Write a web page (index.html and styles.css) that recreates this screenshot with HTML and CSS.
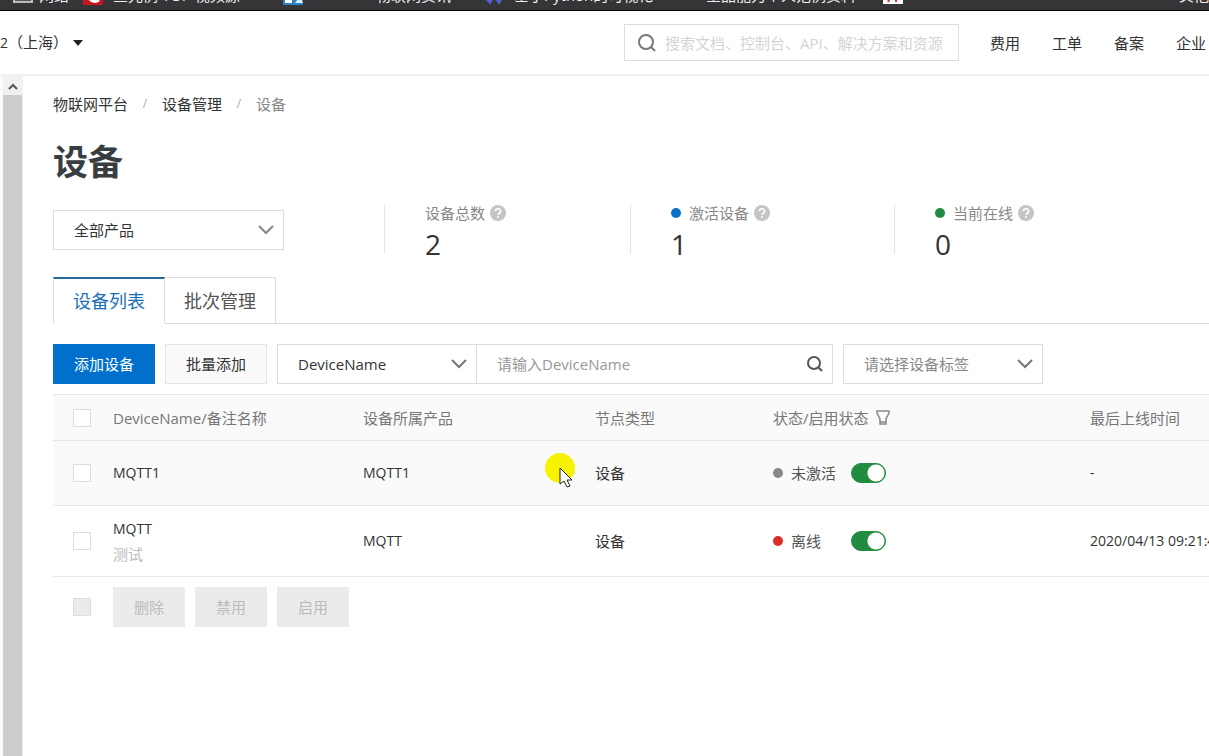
FILE: index.html
```html
<!DOCTYPE html>
<html lang="zh-CN">
<head>
<meta charset="utf-8">
<title>设备</title>
<link rel="stylesheet" href="styles.css">
</head>
<body>
<div class="page">
  <div class="bookmarks">
    <svg class="bm-folder" width="20" height="14" viewBox="0 0 20 14"><rect x="1" y="1" width="18" height="12" fill="#555" stroke="#bbb" stroke-width="2"/></svg>
    <span class="bm-label bm-first">网络</span>
    <svg class="bm-icon" width="20" height="16" viewBox="0 0 20 16"><rect width="20" height="16" fill="#c9151e"/><path d="M5 8q5 7 11 3" fill="none" stroke="#fff" stroke-width="3"/></svg>
    <span class="bm-label bm-wide">查先例 TOP 视频源</span>
    <svg class="bm-icon" width="20" height="16" viewBox="0 0 20 16"><rect width="20" height="16" fill="#2d7fc4"/><rect x="2" y="7" width="7" height="7" fill="#fff"/><path d="M12 14l5-7 3 7z" fill="#d9f0ff"/></svg>
    <span class="bm-label bm-mid">物联网资讯</span>
    <svg class="bm-icon" width="20" height="14" viewBox="0 0 20 14"><path d="M3 8l3 3 2-4M12 7l3 4 3-5" fill="none" stroke="#5a5fd0" stroke-width="3"/></svg>
    <span class="bm-label bm-paho">基于Python的可视化</span>
    <span class="bm-label bm-long">全品能力个人范例资料</span>
    <svg class="bm-icon" width="20" height="16" viewBox="0 0 20 16"><rect width="20" height="15" fill="#fff"/><path d="M5 13l3-6M13 13V7M3 9h14" stroke="#d33" stroke-width="2"/></svg>
    <span class="bm-label bm-last">其他</span>
  </div>

  <header class="topbar">
    <button class="region" type="button"><span><span class="latin">2</span>（上海）</span>
      <svg width="10" height="6" viewBox="0 0 10 6"><path d="M0 0h10L5 6z" fill="#222"/></svg></button>
    <label class="search">
      <svg width="18" height="18" viewBox="0 0 18 18"><circle cx="8" cy="8" r="7" fill="none" stroke="#777" stroke-width="2"/><path d="M13 13l4 4" stroke="#777" stroke-width="2"/></svg>
      <input type="text" placeholder="搜索文档、控制台、API、解决方案和资源" aria-label="搜索">
    </label>
    <nav class="topnav"><a href="#">费用</a><a href="#">工单</a><a href="#">备案</a><a href="#">企业</a></nav>
  </header>

  <div class="body">
    <aside class="edge"></aside>
    <div class="scrollbar">
      <div class="scroll-up"><svg width="12" height="8" viewBox="0 0 12 8"><path d="M2 7l4-4 4 4" fill="none" stroke="#555" stroke-width="2"/></svg></div>
      <div class="scroll-thumb"></div>
    </div>

    <main class="main">
      <nav class="crumbs"><a href="#">物联网平台</a><i>/</i><a href="#">设备管理</a><i>/</i><span>设备</span></nav>
      <h1>设备</h1>

      <section class="overview">
        <div class="select product">
          <select aria-label="产品"><option>全部产品</option></select>
          <svg class="chevron" width="16" height="10" viewBox="0 0 16 10"><path d="M1 1l7 7 7-7" fill="none" stroke="#888" stroke-width="2"/></svg>
        </div>
        <div class="stat">
          <div class="stat-label">设备总数<svg class="help" width="16" height="16" viewBox="0 0 16 16"><circle cx="8" cy="8" r="8" fill="#c4c4c4"/><path d="M5.500 6.200a2.500 2.500 0 1 1 3.600 2.200q-1.100.6-1.100 1.600M8 11v2" fill="none" stroke="#fff" stroke-width="1.600"/></svg></div>
          <div class="stat-value">2</div>
        </div>
        <div class="stat stat-wide">
          <div class="stat-label"><b class="dot blue"></b>激活设备<svg class="help" width="16" height="16" viewBox="0 0 16 16"><circle cx="8" cy="8" r="8" fill="#c4c4c4"/><path d="M5.500 6.200a2.500 2.500 0 1 1 3.600 2.200q-1.100.6-1.100 1.600M8 11v2" fill="none" stroke="#fff" stroke-width="1.600"/></svg></div>
          <div class="stat-value">1</div>
        </div>
        <div class="stat">
          <div class="stat-label"><b class="dot green"></b>当前在线<svg class="help" width="16" height="16" viewBox="0 0 16 16"><circle cx="8" cy="8" r="8" fill="#c4c4c4"/><path d="M5.500 6.200a2.500 2.500 0 1 1 3.600 2.200q-1.100.6-1.100 1.600M8 11v2" fill="none" stroke="#fff" stroke-width="1.600"/></svg></div>
          <div class="stat-value">0</div>
        </div>
      </section>

      <div class="tabs">
        <button class="tab active" type="button">设备列表</button><button class="tab" type="button">批次管理</button><div class="tab-line"></div>
      </div>

      <div class="toolbar">
        <button class="btn primary" type="button">添加设备</button>
        <button class="btn" type="button">批量添加</button>
        <div class="query">
          <div class="select field">
            <select aria-label="查询字段"><option>DeviceName</option></select>
            <svg class="chevron" width="16" height="10" viewBox="0 0 16 10"><path d="M1 1l7 7 7-7" fill="none" stroke="#777" stroke-width="2"/></svg>
          </div>
          <label class="keyword">
            <input type="text" placeholder="请输入DeviceName" aria-label="DeviceName">
            <svg width="16" height="16" viewBox="0 0 16 16"><circle cx="7" cy="7" r="6" fill="none" stroke="#555" stroke-width="2"/><path d="M11 11l4 4" stroke="#555" stroke-width="2"/></svg>
          </label>
        </div>
        <div class="select tag">
          <select aria-label="设备标签"><option>请选择设备标签</option></select>
          <svg class="chevron" width="16" height="10" viewBox="0 0 16 10"><path d="M1 1l7 7 7-7" fill="none" stroke="#777" stroke-width="2"/></svg>
        </div>
      </div>

      <table class="devices">
        <colgroup><col class="c-check"><col class="c-name"><col class="c-product"><col class="c-type"><col class="c-state"><col></colgroup>
        <thead>
          <tr>
            <th><input type="checkbox" aria-label="全选"></th>
            <th>DeviceName/备注名称</th>
            <th>设备所属产品</th>
            <th>节点类型</th>
            <th><div class="state">状态/启用状态<svg class="filter" width="14" height="16" viewBox="0 0 14 16"><path d="M1 1h12v2l-3 6v5H4V9L1 3zM4 12h6" fill="none" stroke="#888" stroke-width="1.500"/></svg></div></th>
            <th>最后上线时间</th>
          </tr>
        </thead>
        <tbody>
          <tr class="hover">
            <td><input type="checkbox" aria-label="MQTT1"></td>
            <td class="latin">MQTT1</td>
            <td class="latin">MQTT1</td>
            <td>设备</td>
            <td><div class="state"><b class="dot grey"></b><span class="state-text">未激活</span><input class="switch" type="checkbox" checked aria-label="启用 MQTT1"></div></td>
            <td class="latin">-</td>
          </tr>
          <tr class="tall">
            <td><input type="checkbox" aria-label="MQTT"></td>
            <td><div class="latin">MQTT</div><div class="note">测试</div></td>
            <td class="latin">MQTT</td>
            <td>设备</td>
            <td><div class="state"><b class="dot red"></b><span class="state-text">离线</span><input class="switch" type="checkbox" checked aria-label="启用 MQTT"></div></td>
            <td class="latin">2020/04/13 09:21:43</td>
          </tr>
        </tbody>
      </table>

      <div class="batch">
        <input type="checkbox" disabled aria-label="全选">
        <div class="batch-buttons">
          <button class="btn" type="button" disabled>删除</button>
          <button class="btn" type="button" disabled>禁用</button>
          <button class="btn" type="button" disabled>启用</button>
        </div>
      </div>
    </main>
  </div>

  <svg class="pointer" width="32" height="36" viewBox="0 0 32 36"><circle cx="16" cy="15" r="15" fill="#f7f200"/><path d="M16 15v16l4-3 3 6 3-1-3-6h5z" fill="#fff" stroke="#222" stroke-width="1"/></svg>
</div>
</body>
</html>
```
FILE: styles.css
```css
* { box-sizing: border-box; }

body {
  margin: 0;
  background: #fff;
  color: #333;
  font: 15px/20px "Open Sans", "Noto Sans CJK SC", sans-serif;
}

a { color: inherit; text-decoration: none; }

button, input, select {
  margin: 0;
  font: inherit;
  color: inherit;
}

.latin { font-size: 14px; }

.page {
  position: relative;
  display: flex;
  flex-direction: column;
  min-height: 100vh;
  overflow: hidden;
}

/* Bookmark strip */
.bookmarks {
  display: flex;
  align-items: flex-end;
  height: 11px;
  padding: 0 0 7px 13px;
  overflow: hidden;
  background: #353436;
  border-bottom: 1px solid #000;
  color: #f0f0f0;
  white-space: nowrap;
}
.bm-label { flex: none; height: 20px; margin: 0 0 -2px 6px; }
.bm-folder, .bm-icon { flex: none; }
.bm-icon { margin-bottom: -2px; }
.bm-first { width: 44px; }
.bm-wide { width: 174px; padding-left: 4px; }
.bm-mid { width: 175px; padding-left: 67px; }
.bm-paho { width: 190px; padding-left: 4px; }
.bm-long { width: 177px; }
.bm-last { margin-left: auto; padding-right: 0; }

/* Console header */
.topbar {
  display: flex;
  align-items: center;
  height: 65px;
  padding: 0 3px 0 0;
  border-bottom: 2px solid #f2f2f2;
}
.region {
  display: flex;
  align-items: center;
  gap: 5px;
  padding: 0;
  border: 0;
  background: none;
}
.search {
  display: flex;
  align-items: center;
  gap: 9px;
  width: 335px;
  height: 37px;
  margin-left: auto;
  padding: 0 13px;
  border: 1px solid #ddd;
}
.search svg { flex: none; }
.search input {
  flex: 1;
  min-width: 0;
  padding: 0;
  border: 0;
  outline: 0;
  background: none;
}
.search input::placeholder { color: #d4d4d4; opacity: 1; }
.topnav { display: flex; gap: 32px; margin-left: 31px; }

/* Frame around the content */
.body { display: flex; flex: 1; }
.edge { width: 3px; background: #fafafa; }
.scrollbar { display: flex; flex-direction: column; width: 20px; background: #f1f1f1; }
.scroll-up { display: flex; align-items: center; justify-content: center; height: 19px; }
.scroll-thumb { flex: 1; margin-right: 1px; background: #cdcdcd; }
.main { flex: 1; min-width: 0; padding: 18px 0 0 30px; }

.crumbs { display: flex; }
.crumbs i { width: 34px; color: #aaa; font-size: 12px; font-style: normal; text-align: center; }
.crumbs span { color: #888; }

h1 { margin: 22px 0 0; font-size: 35px; line-height: 52px; font-weight: 700; color: #373d41; }

/* Product filter and counters */
.overview { display: flex; align-items: center; margin-top: 17px; }
.select { position: relative; height: 40px; border: 1px solid #ddd; background: #fff; }
.select select {
  width: 100%;
  height: 100%;
  padding: 0 40px 0 20px;
  border: 0;
  outline: 0;
  background: none;
  appearance: none;
}
.chevron { position: absolute; top: 14px; right: 9px; pointer-events: none; }
.product { width: 231px; margin-right: 100px; }
.stat { width: 246px; height: 49px; padding-left: 40px; border-left: 1px solid #e5e5e5; }
.stat-wide { width: 264px; }
.stat-label { display: flex; align-items: center; height: 16px; color: #888; }
.stat-value { margin-top: 7px; font-size: 28px; line-height: 32px; }
.help { margin-left: 5px; }
.dot { flex: none; width: 10px; height: 10px; margin-right: 8px; border-radius: 50%; }
.blue { background: #0b6fc8; }
.green { background: #218c3f; }
.grey { background: #888; }
.red { background: #d93026; }

/* Tabs */
.tabs { display: flex; margin-top: 23px; }
.tab {
  height: 47px;
  padding: 0 19px;
  border: 1px solid #ddd;
  border-left: 0;
  background: #fff;
  font-size: 18px;
  color: #555;
}
.tab.active {
  border-top: 2px solid #22699d;
  border-bottom-color: #fff;
  border-left: 1px solid #ddd;
  color: #1c6fb7;
}
.tab-line { flex: 1; border-bottom: 1px solid #ddd; }

/* Toolbar */
.toolbar { display: flex; gap: 10px; margin-top: 20px; }
.btn {
  height: 40px;
  padding: 0 20px;
  border: 1px solid #e5e5e5;
  background: #fafafa;
}
.btn.primary { border-color: #0070cc; background: #0070cc; color: #fff; }
.btn:disabled { border-color: #ebebeb; background: #ebebeb; color: #bbb; }
.query { display: flex; }
.field { width: 200px; }
.keyword {
  display: flex;
  align-items: center;
  width: 356px;
  padding: 0 9px 0 20px;
  border: 1px solid #ddd;
  border-left: 0;
}
.keyword input { flex: 1; min-width: 0; padding: 0; border: 0; outline: 0; }
.keyword input::placeholder { color: #999; opacity: 1; }
.tag { width: 200px; color: #888; }

/* Device table */
.devices {
  width: 100%;
  margin-top: 10px;
  border-collapse: collapse;
  border-top: 1px solid #e8e8e8;
  table-layout: fixed;
}
.devices th, .devices td {
  height: 65px;
  padding: 0 0 0 20px;
  border-bottom: 1px solid #e8e8e8;
  font-weight: 400;
  text-align: left;
  vertical-align: middle;
  white-space: nowrap;
}
.devices th { height: 46px; background: #fafafa; color: #777; }
.devices .tall td { height: 71px; }
.hover { background: #fafafa; }
.c-check { width: 40px; }
.c-name { width: 250px; }
.c-product { width: 232px; }
.c-type { width: 178px; }
.c-state { width: 317px; }
.note { margin-top: 5px; color: #bbb; }
.state { display: flex; align-items: center; }
.state-text { width: 60px; color: #555; }
.filter { margin-left: 7px; }

input[type="checkbox"] {
  display: block;
  width: 18px;
  height: 18px;
  border: 1px solid #ddd;
  background: #fff;
  appearance: none;
}
input[type="checkbox"]:disabled { background: #ebebeb; }
input.switch[type="checkbox"] {
  width: 35px;
  height: 20px;
  border: 1px solid #218c3f;
  border-radius: 10px;
  background: radial-gradient(circle at 24px 9px, #fff 8px, #218c3f 9px);
}

.batch { display: flex; align-items: center; gap: 22px; padding: 10px 20px; }
.batch-buttons { display: flex; gap: 10px; }

/* Highlighted mouse pointer, floating over the page */
.pointer { position: absolute; left: 544px; top: 453px; pointer-events: none; }
```
